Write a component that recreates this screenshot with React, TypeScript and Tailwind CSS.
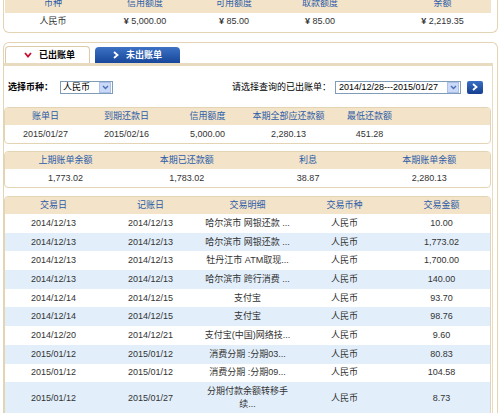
import React from "react";

const font = "font-['Liberation_Sans','Noto_Sans_CJK_SC',sans-serif]";

const rows: [string, string, React.ReactNode, string][] = [
  ["2014/12/13", "2014/12/13", "哈尔滨市 网银还款 ...", "10.00"],
  ["2014/12/13", "2014/12/13", "哈尔滨市 网银还款 ...", "1,773.02"],
  ["2014/12/13", "2014/12/13", "牡丹江市 ATM取现...", "1,700.00"],
  ["2014/12/13", "2014/12/13", "哈尔滨市 跨行消费 ...", "140.00"],
  ["2014/12/14", "2014/12/15", "支付宝", "93.70"],
  ["2014/12/14", "2014/12/15", "支付宝", "98.76"],
  ["2014/12/20", "2014/12/21", "支付宝(中国)网络技...", "9.60"],
  ["2015/01/12", "2015/01/12", "消费分期 :分期03...", "80.83"],
  ["2015/01/12", "2015/01/12", "消费分期 :分期09...", "104.58"],
];

function DownBtn() {
  return (
    <div className="w-[12px] h-[11px] mr-[1px] shrink-0 bg-[#c9d9f7] border border-[#a9c0ea] flex items-center justify-center">
      <svg width="7" height="5" viewBox="0 0 7 5">
        <polyline points="1,1 3.5,3.5 6,1" fill="none" stroke="#4d6fb8" strokeWidth="1.4" />
      </svg>
    </div>
  );
}

export default function App() {
  return (
    <div className={`w-[500px] h-[413px] overflow-hidden bg-white text-[9px] leading-none text-[#333] ${font}`}>
      {/* Panel A */}
      <div className="-mt-[6px] ml-[3px] w-[495px] border border-t-0 border-[#e3d4b4] rounded-b-[6px] pl-[1px] pr-[6px] pb-[2px]">
        <div className="grid grid-cols-[96px_88px_90px_82px_1fr] h-[19px] bg-[#f3e4c9] text-[#2b5ba8] items-center text-center">
          <div>币种</div>
          <div>信用额度</div>
          <div>可用额度</div>
          <div>取款额度</div>
          <div className="pl-[33px]">余额</div>
        </div>
        <div className="grid grid-cols-[96px_88px_90px_82px_1fr] h-[17px] items-center text-center">
          <div>人民币</div>
          <div><b>¥</b> 5,000.00</div>
          <div><b>¥</b> 85.00</div>
          <div><b>¥</b> 85.00</div>
          <div className="pl-[33px]"><b>¥</b> 2,219.35</div>
        </div>
      </div>

      {/* Outer B */}
      <div className="mt-[9px] ml-[3px] w-[495px] border border-b-0 border-[#e3d4b4] rounded-t-[6px] pt-[3px] pr-[4px]">
        <div className="flex items-end gap-[5px] pl-[1px]">
          <div className="w-[85px] h-[17px] bg-white border border-b-0 border-[#dccba8] rounded-t-[4px] flex items-center pl-[18px] gap-[7px] font-bold text-black">
            <svg width="8" height="6" viewBox="0 0 8 6">
              <polyline points="1,1 4,4.5 7,1" fill="none" stroke="#c8102e" strokeWidth="1.8" />
            </svg>
            <span>已出账单</span>
          </div>
          <div className="w-[85px] h-[16px] bg-gradient-to-b from-[#3d72c4] to-[#17479a] rounded-t-[4px] flex items-center pl-[18px] gap-[7px] font-bold text-white">
            <svg width="6" height="8" viewBox="0 0 6 8">
              <polyline points="1,1 4.5,4 1,7" fill="none" stroke="#ffffff" strokeWidth="1.8" />
            </svg>
            <span>未出账单</span>
          </div>
        </div>

        <div className="border-t-[3px] border-r border-[#e8dbbf] pt-[14px] pr-[1px]">
          {/* select row */}
          <div className="flex items-center h-[14px] pl-[4px] pr-[8px]">
            <span className="font-bold text-black">选择币种：</span>
            <div className="ml-[7px] w-[53px] h-[13px] border border-[#7f9db9] flex items-center justify-between">
              <span className="pl-[2px] text-black">人民币</span>
              <DownBtn />
            </div>
            <div className="ml-auto flex items-center">
              <span className="text-black whitespace-nowrap">请选择查询的已出账单：</span>
              <div className="ml-[4px] w-[126px] h-[13px] border border-[#7f9db9] flex items-center justify-between overflow-hidden">
                <span className="pl-[3px] text-black whitespace-nowrap">2014/12/28---2015/01/27</span>
                <DownBtn />
              </div>
              <div className="ml-[6px] w-[16px] h-[13px] rounded-[2px] bg-gradient-to-b from-[#3a6fc4] to-[#163f90] flex items-center justify-center">
                <svg width="6" height="8" viewBox="0 0 6 8">
                  <polyline points="1,1 4.5,4 1,7" fill="none" stroke="#ffffff" strokeWidth="1.8" />
                </svg>
              </div>
            </div>
          </div>

          {/* account panel */}
          <div className="mt-[13px] border border-[#e3d4b4] rounded-[4px] overflow-hidden">
            <div className="grid grid-cols-[81px_81px_81px_81px_81px_1fr] h-[17px] bg-[#f3e4c9] text-[#2b5ba8] items-center text-center">
              <div>账单日</div>
              <div>到期还款日</div>
              <div>信用额度</div>
              <div>本期全部应还款额</div>
              <div>最低还款额</div>
              <div></div>
            </div>
            <div className="grid grid-cols-[81px_81px_81px_81px_81px_1fr] h-[18px] items-center text-center">
              <div>2015/01/27</div>
              <div>2015/02/16</div>
              <div>5,000.00</div>
              <div>2,280.13</div>
              <div>451.28</div>
              <div></div>
            </div>
          </div>

          {/* summary panel */}
          <div className="mt-[7px] border border-[#e3d4b4] rounded-[4px] overflow-hidden">
            <div className="grid grid-cols-4 h-[17px] bg-[#f3e4c9] text-[#2b5ba8] items-center text-center">
              <div>上期账单余额</div>
              <div>本期已还款额</div>
              <div>利息</div>
              <div>本期账单余额</div>
            </div>
            <div className="grid grid-cols-4 h-[18px] items-center text-center">
              <div>1,773.02</div>
              <div>1,783.02</div>
              <div>38.87</div>
              <div>2,280.13</div>
            </div>
          </div>

          {/* transactions */}
          <div className="mt-[8px] border border-[#e3d4b4] rounded-t-[4px] overflow-hidden">
            <div className="grid grid-cols-5 h-[17px] bg-[#f3e4c9] text-[#2b5ba8] items-center text-center">
              <div>交易日</div>
              <div>记账日</div>
              <div>交易明细</div>
              <div>交易币种</div>
              <div>交易金额</div>
            </div>
            {rows.map((r, i) => (
              <div
                key={i}
                className={`grid grid-cols-5 h-[18.7px] items-center text-center ${i % 2 === 1 ? "bg-[#e2effb]" : "bg-white"}`}
              >
                <div>{r[0]}</div>
                <div>{r[1]}</div>
                <div className="whitespace-nowrap">{r[2]}</div>
                <div>人民币</div>
                <div>{r[3]}</div>
              </div>
            ))}
            <div className="grid grid-cols-5 h-[32px] items-center text-center bg-[#e2effb]">
              <div>2015/01/12</div>
              <div>2015/01/27</div>
              <div className="leading-[13px]">分期付款余额转移手<br />续...</div>
              <div>人民币</div>
              <div>8.73</div>
            </div>
          </div>
        </div>
      </div>
    </div>
  );
}
